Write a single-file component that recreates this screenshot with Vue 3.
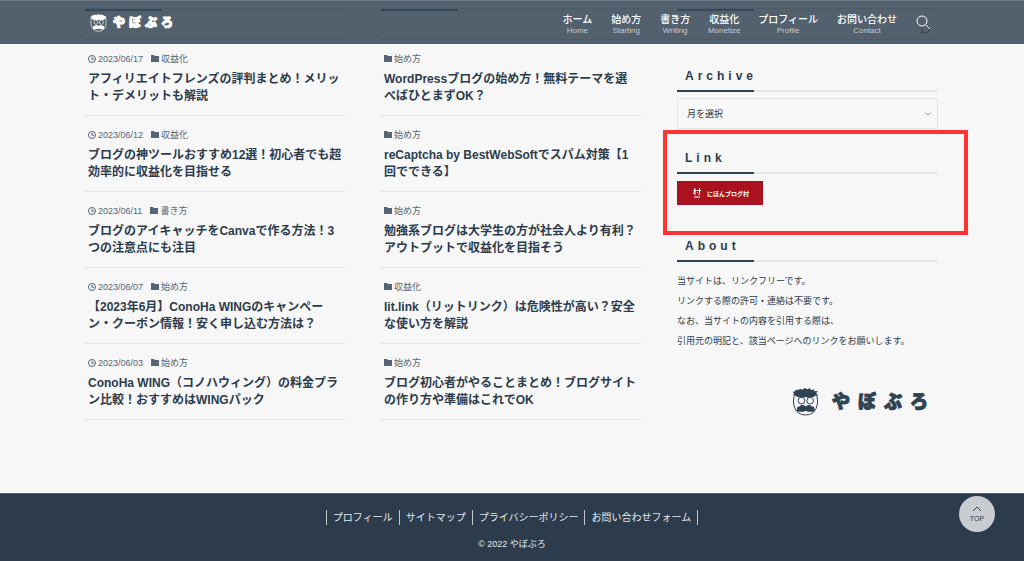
<script setup>
const nav = [
  ['ホーム', 'Home'],
  ['始め方', 'Starting'],
  ['書き方', 'Writing'],
  ['収益化', 'Monetize'],
  ['プロフィール', 'Profile'],
  ['お問い合わせ', 'Contact'],
]
const columns = [
  [
    { date: '2023/06/17', cat: '収益化', title: 'アフィリエイトフレンズの評判まとめ！メリット・デメリットも解説' },
    { date: '2023/06/12', cat: '収益化', title: 'ブログの神ツールおすすめ12選！初心者でも超効率的に収益化を目指せる' },
    { date: '2023/06/11', cat: '書き方', title: 'ブログのアイキャッチをCanvaで作る方法！3つの注意点にも注目' },
    { date: '2023/06/07', cat: '始め方', title: '【2023年6月】ConoHa WINGのキャンペーン・クーポン情報！安く申し込む方法は？' },
    { date: '2023/06/03', cat: '始め方', title: 'ConoHa WING（コノハウィング）の料金プラン比較！おすすめはWINGパック' },
  ],
  [
    { cat: '始め方', title: 'WordPressブログの始め方！無料テーマを選べばひとまずOK？' },
    { cat: '始め方', title: 'reCaptcha by BestWebSoftでスパム対策【1回でできる】' },
    { cat: '始め方', title: '勉強系ブログは大学生の方が社会人より有利？アウトプットで収益化を目指そう' },
    { cat: '収益化', title: 'lit.link（リットリンク）は危険性が高い？安全な使い方を解説' },
    { cat: '始め方', title: 'ブログ初心者がやることまとめ！ブログサイトの作り方や準備はこれでOK' },
  ],
]
const footer = ['プロフィール', 'サイトマップ', 'プライバシーポリシー', 'お問い合わせフォーム']
const about = [
  '当サイトは、リンクフリーです。',
  'リンクする際の許可・連絡は不要です。',
  'なお、当サイトの内容を引用する際は、',
  '引用元の明記と、該当ページへのリンクをお願いします。',
]
</script>

<template>
  <div class="page">
    <svg class="defs" aria-hidden="true">
      <symbol id="face" viewBox="0 0 80 84">
        <path class="ink" d="M1 11l9-1-1-5 9 1 6-4 6 3 8-5 7 4 8-3 4 5 9-2-1 5 13 1-6 5 6 8-10 0-3 4-9 0-8 2-8-2-8 2-7-2-9 1-6-5-8-1 4-5z" />
        <path class="line" d="M6 24C0 46 6 81 40 81S80 46 74 24" />
        <circle class="line" cx="28" cy="38" r="10" />
        <circle class="line" cx="54" cy="38" r="10" />
        <path class="ink" d="M14 71v-9c0-5 4-7 9-7 4-5 13-5 18 1 5-6 13-6 17-1 5 0 9 2 9 7v9H48c-4-3-10-3-14 0z" />
      </symbol>
    </svg>

    <header class="header">
      <div class="wrap bar">
        <a href="#" class="logo">
          <svg class="face" aria-hidden="true"><use href="#face" /></svg>
          <span>やぼぶろ</span>
        </a>
        <nav class="nav">
          <a v-for="n in nav" :key="n[1]" href="#"><span>{{ n[0] }}</span><small>{{ n[1] }}</small></a>
          <button class="search" aria-label="検索">
            <svg viewBox="0 0 16 20" aria-hidden="true">
              <path class="ghost" d="M4 21l3-3M6 14a4 4 0 1 0 6-1" />
              <circle cx="6" cy="8" r="5" /><path d="M10 12l4 4" />
            </svg>
          </button>
        </nav>
      </div>
      <div class="wrap behind" aria-hidden="true"><i /><i /><i /></div>
    </header>

    <main class="wrap main">
      <section v-for="(col, i) in columns" :key="i" class="col">
        <article v-for="p in col" :key="p.title">
          <div class="meta">
            <time v-if="p.date"><svg viewBox="0 0 8 8" aria-hidden="true"><circle cx="4" cy="4" r="3.500" /><path d="M4 2v2.300h2" /></svg>{{ p.date }}</time>
            <span><svg class="folder" viewBox="0 0 8 8" aria-hidden="true"><path d="M0 0h3l1 1h4v6H0z" /></svg>{{ p.cat }}</span>
          </div>
          <h3><a href="#">{{ p.title }}</a></h3>
        </article>
      </section>
      <aside class="side">
        <section class="archive">
          <h2><label for="month">Archive</label></h2>
          <div class="select">
            <select id="month"><option>月を選択</option></select>
            <svg viewBox="0 0 6 4" aria-hidden="true"><path d="M.5.500L3 3l2.500-2.500" /></svg>
          </div>
        </section>
        <section class="link">
          <h2>Link</h2>
          <a href="#" class="banner">
            <svg viewBox="0 0 8 10" aria-hidden="true"><path d="M0 2.500h3.500M2 0v7M2 3L.5 5.500M4 2.500h4M6.500 0v6.500H5.500M4.500 4v1M1 9h6" /></svg>
            <span>にほんブログ村</span>
          </a>
        </section>
        <section class="about">
          <h2>About</h2>
          <p v-for="a in about" :key="a">{{ a }}</p>
        </section>
        <a href="#" class="logo big">
          <svg class="face" aria-hidden="true"><use href="#face" /></svg>
          <span>やぼぶろ</span>
        </a>
      </aside>
    </main>

    <footer class="footer">
      <nav><a v-for="f in footer" :key="f" href="#">{{ f }}</a></nav>
      <p>© 2022 やぼぶろ</p>
    </footer>
    <a href="#" class="totop">
      <svg viewBox="0 0 10 6" aria-hidden="true"><path d="M1 5l4-4 4 4" /></svg>TOP
    </a>
  </div>
</template>

<style>
body { margin: 0; background: #f7f7f7; }
</style>

<style scoped>
* { box-sizing: border-box; }
.page {
  font-family: "Liberation Sans", "Noto Sans CJK JP", sans-serif;
  color: #2c3c4c;
  min-height: 100vh;
  display: flex;
  flex-direction: column;
}
a { color: inherit; text-decoration: none; }
h2, h3, p { margin: 0; }
svg { flex: none; fill: none; stroke: currentColor; }
.defs { position: absolute; width: 0; height: 0; }
.wrap { width: 100%; max-width: 854px; margin: 0 auto; }

.header {
  position: fixed;
  inset: 0 0 auto;
  z-index: 2;
  height: 44px;
  background: #53616e;
  border-top: 1px solid #6c7985;
  color: #fff;
}
.bar { position: relative; z-index: 1; display: flex; align-items: center; justify-content: space-between; height: 43px; padding: 0 7px 0 5px; }
.behind {
  position: absolute;
  inset: 7px 0 auto;
  display: grid;
  grid-template-columns: 261px 261px 261px;
  gap: 35px;
}
.behind i { height: 32px; border: solid #4d5b68; border-width: 1px 0; }
.behind i::before { content: ""; display: block; width: 77px; height: 2px; background: #35495a; }
.logo { display: flex; align-items: center; gap: 6px; }
.logo span { font-size: 12px; line-height: 16px; font-weight: 900; letter-spacing: 4px; -webkit-text-stroke: 1px currentColor; }
.face { width: 17px; height: 18px; }
.ink { fill: currentColor; stroke: none; }
.line { stroke-width: 3; }
.nav { display: flex; align-items: center; gap: 19px; }
.nav a { display: flex; flex-direction: column; align-items: center; white-space: nowrap; padding-top: 2px; }
.nav a span { font-size: 10px; line-height: 14px; font-weight: 500; }
.nav small { font-size: 8px; line-height: 8px; margin: 0 -2px; color: #c3c9ce; }
.search { width: 16px; height: 20px; padding: 0; border: 0; background: none; color: #fff; }
.search svg { display: block; width: 16px; height: 20px; overflow: visible; }
.search .ghost { stroke: #35434f; }

.main { display: grid; grid-template-columns: 261px 261px 261px; gap: 35px; padding-top: 44px; flex: 1; }
article { height: 76px; padding: 14px 3px 0; border-bottom: 1px solid #e2e3e4; }
article:first-child { height: 72px; padding-top: 10px; }
.meta { display: flex; gap: 8px; font-size: 9px; line-height: 10px; color: #566573; }
.meta time, .meta span { display: flex; align-items: center; gap: 2px; }
.meta svg { width: 8px; height: 8px; }
.meta .folder { fill: currentColor; stroke: none; }
h3 { margin-top: 7px; font-size: 12px; line-height: 17px; font-weight: 700; }

.side h2 {
  display: flex;
  flex-direction: column;
  padding-left: 8px;
  font-size: 12px;
  line-height: 16px;
  letter-spacing: 4px;
  height: 24px;
  position: relative;
  border-bottom: 2px solid #e8e8e9;
}
.side h2::after { content: ""; position: absolute; left: 0; bottom: -2px; width: 77px; height: 2px; background: #2f4557; }
.archive { padding-top: 24px; }
.select { position: relative; margin-top: 6px; }
.select select {
  display: block;
  width: 100%;
  height: 31px;
  padding: 0 9px;
  appearance: none;
  background: #f8f8f8;
  border: 1px solid #e2e2e2;
  border-radius: 1px;
  font: 9px "Liberation Sans", "Noto Sans CJK JP", sans-serif;
  color: #333;
}
.select svg { position: absolute; right: 7px; top: 14px; width: 6px; height: 4px; stroke: #999; }
.link { margin: 1px -30px 0 -14px; padding: 16px 26px 26px 10px; border: 4px solid #ff3333; }
.banner { display: flex; align-items: center; gap: 6px; width: 86px; height: 24px; margin-top: 7px; padding-left: 16px; background: #ab1220; color: #fff; }
.banner svg { width: 8px; height: 10px; }
.banner span { font-size: 6px; font-weight: 700; white-space: nowrap; }
.about { padding-top: 3px; }
.about h2 { margin-bottom: 9px; }
.about p { font-size: 9px; line-height: 20px; white-space: nowrap; }
.big { gap: 13px; justify-content: flex-end; margin-top: 37px; padding-right: 2px; color: #2f4353; }
.big .face { width: 27px; height: 28px; }
.big span { font-size: 18px; line-height: 28px; letter-spacing: 8px; }

.footer { height: 68px; padding-top: 16px; text-align: center; background: #2c3c4c; border-top: 1px solid #536170; color: #e6e8ea; }
.footer nav { display: flex; justify-content: center; font-size: 10px; line-height: 15px; }
.footer nav a { padding: 0 6px; border-right: 1px solid #c5cacf; }
.footer nav a:first-child { border-left: 1px solid #c5cacf; }
.footer p { margin-top: 13px; font-size: 9px; line-height: 12px; }
.totop {
  position: fixed;
  right: 29px;
  bottom: 29px;
  width: 36px;
  height: 36px;
  border-radius: 50%;
  background: #c9ccd1;
  display: flex;
  flex-direction: column;
  align-items: center;
  padding-top: 10px;
  gap: 3px;
  font-size: 7px;
  line-height: 8px;
}
.totop svg { width: 10px; height: 6px; }
</style>
